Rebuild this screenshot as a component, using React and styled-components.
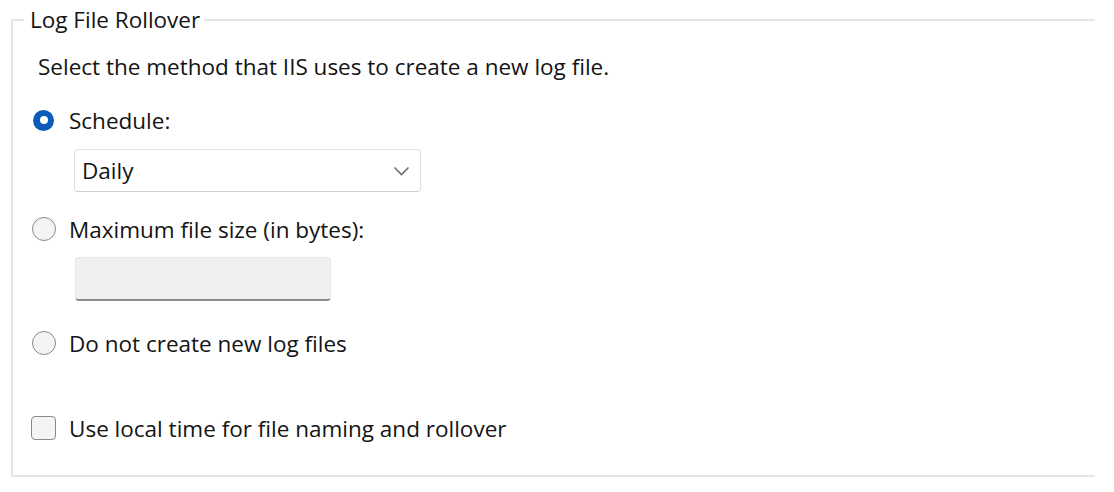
import React from "react";
import styled, { createGlobalStyle } from "styled-components";

const Global = createGlobalStyle`
  html, body { margin: 0; padding: 0; background: #ffffff; }
  body { font-family: "Open Sans", "Noto Sans", sans-serif; color: #141414; }
  * { box-sizing: border-box; }
`;

const Page = styled.div`
  width: 1114px;
  height: 492px;
  padding: 6px 0 0 11px;
  background: #ffffff;
`;

const Group = styled.fieldset`
  margin: 0;
  width: 1084px;
  height: 471px;
  padding: 0 0 0 11px;
  border: 2px solid #e6e6e6;
  border-right: none;
  min-width: 0;
`;

const Legend = styled.legend`
  margin-left: 0;
  padding: 0 4px 0 6px;
  font-size: 22.5px;
  line-height: 28px;
  color: #141414;
`;

const Intro = styled.div`
  font-size: 22.5px;
  line-height: 28px;
  margin-top: 19px;
  padding-left: 14px;
`;

const Options = styled.div`
  display: flex;
  flex-direction: column;
  margin-top: 25px;
  padding-left: 7px;
`;

const Row = styled.label`
  display: flex;
  align-items: center;
  gap: 13px;
  height: 28px;
  font-size: 22.5px;
  margin-top: ${(p) => p.$mt || 0}px;
`;

const ControlBox = styled.span`
  width: 25px;
  height: 25px;
  flex: none;
  display: flex;
  align-items: center;
  justify-content: center;
`;

const Radio = styled.span`
  width: ${(p) => (p.$checked ? 21 : 24)}px;
  height: ${(p) => (p.$checked ? 21 : 24)}px;
  border-radius: 50%;
  flex: none;
  display: flex;
  align-items: center;
  justify-content: center;
  ${(p) =>
    p.$checked
      ? `background: #0a5cb8; border: none;`
      : `background: #f4f4f4; border: 1.5px solid #8a8a8a;`}
`;

const Dot = styled.span`
  width: 8px;
  height: 8px;
  border-radius: 50%;
  background: #ffffff;
`;

const Check = styled.span`
  width: 25px;
  height: 24px;
  border-radius: 4px;
  flex: none;
  background: #f4f4f4;
  border: 1.5px solid #8a8a8a;
`;

const Select = styled.div`
  margin: 15px 0 0 43px;
  width: 347px;
  height: 43px;
  border: 1.5px solid #e0e0e0;
  border-bottom-color: #d0d0d0;
  border-radius: 4px;
  background: #ffffff;
  display: flex;
  align-items: center;
  justify-content: space-between;
  padding: 0 10px 0 7px;
  font-size: 22.5px;
`;

const Field = styled.div`
  margin: 14px 0 0 44px;
  width: 256px;
  height: 44px;
  background: #f0f0f0;
  border: 1.5px solid #e6e6e6;
  border-bottom: 2px solid #8a8a8a;
  border-radius: 4px;
`;

const Chevron = () => (
  <svg width="17" height="10" viewBox="0 0 17 10">
    <path d="M1.5 1.5 L8.5 8.5 L15.5 1.5" fill="none" stroke="#6e6e6e" strokeWidth="1.6" />
  </svg>
);

export default function App() {
  return (
    <>
      <Global />
      <Page>
        <Group>
          <Legend>Log File Rollover</Legend>
          <Intro>Select the method that IIS uses to create a new log file.</Intro>
          <Options>
            <Row>
              <ControlBox>
                <Radio $checked>
                  <Dot />
                </Radio>
              </ControlBox>
              Schedule:
            </Row>
            <Select>
              <span>Daily</span>
              <Chevron />
            </Select>
            <Row $mt={23}>
              <ControlBox>
                <Radio />
              </ControlBox>
              Maximum file size (in bytes):
            </Row>
            <Field />
            <Row $mt={28}>
              <ControlBox>
                <Radio />
              </ControlBox>
              Do not create new log files
            </Row>
            <Row $mt={57}>
              <ControlBox>
                <Check />
              </ControlBox>
              Use local time for file naming and rollover
            </Row>
          </Options>
        </Group>
      </Page>
    </>
  );
}
